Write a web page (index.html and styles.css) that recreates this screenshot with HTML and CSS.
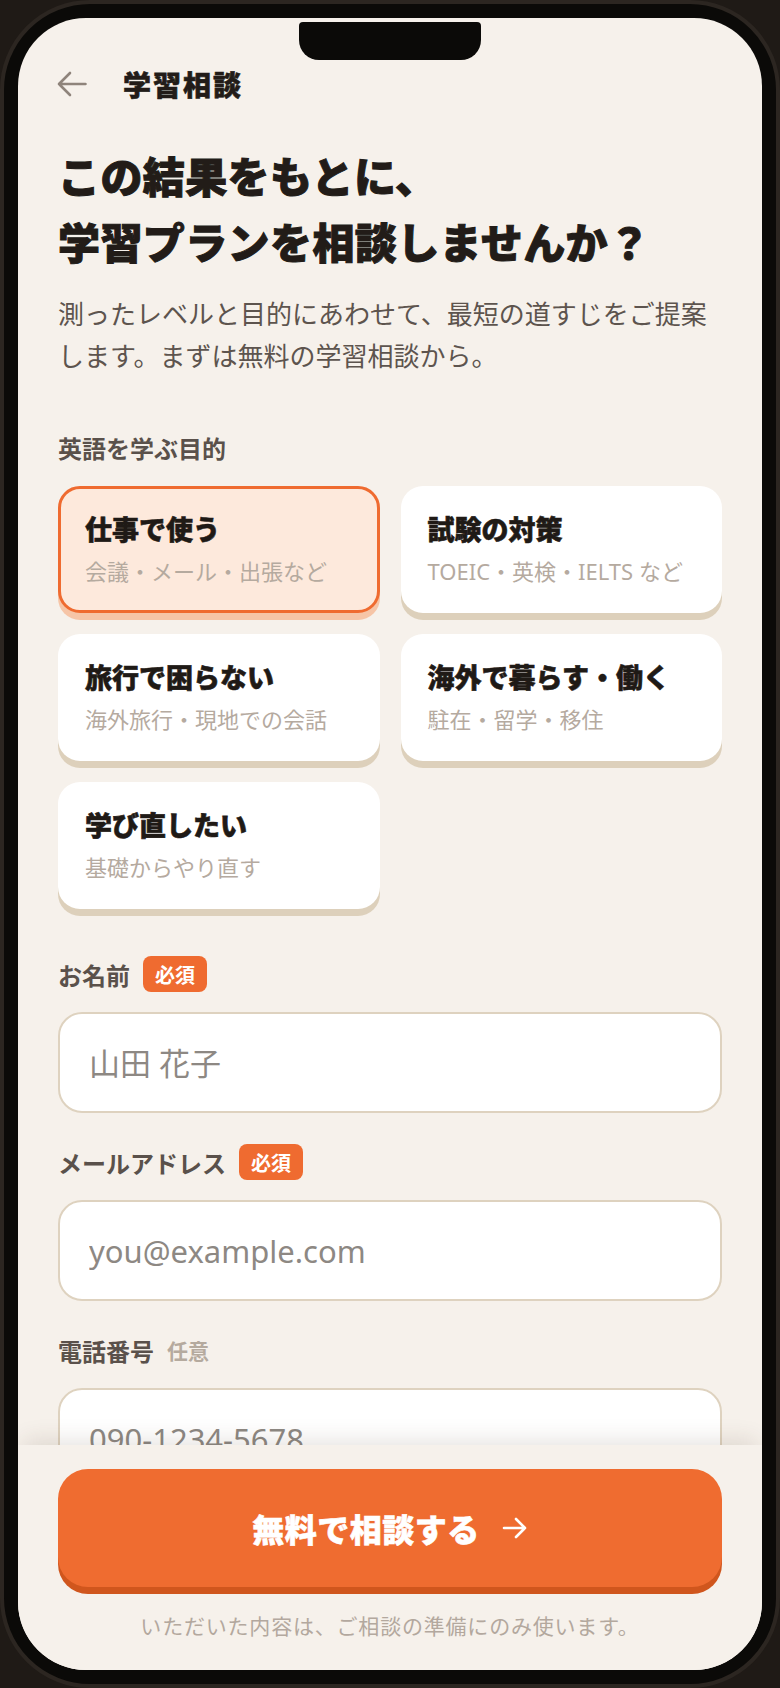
FILE: index.html
```html
<!DOCTYPE html>
<html lang="ja">
<head>
    <meta charset="UTF-8">
    <meta name="viewport" content="width=device-width, initial-scale=1.0">
    <title>学習相談</title>
    <link rel="stylesheet" href="styles.css">
</head>
<body>
    <div class="phone">
        <div class="screen">
            <div class="notch"></div>

            <div class="content">
                <header class="nav">
                    <svg class="nav-back" width="30" height="26" viewBox="0 0 30 26" fill="none">
                        <path d="M28.5 13H2M13 2L2 13l11 11" stroke="#8f847b" stroke-width="2.6" stroke-linecap="round" stroke-linejoin="round"/>
                    </svg>
                    <h1 class="nav-title">学習相談</h1>
                </header>

                <h2 class="headline">この結果をもとに、<br>学習プランを相談しませんか？</h2>
                <p class="lead">測ったレベルと目的にあわせて、最短の道すじをご提案します。まずは無料の学習相談から。</p>

                <div class="section-label">英語を学ぶ目的</div>
                <div class="options">
                    <button class="option is-selected">
                        <span class="option-title">仕事で使う</span>
                        <span class="option-sub">会議・メール・出張など</span>
                    </button>
                    <button class="option">
                        <span class="option-title">試験の対策</span>
                        <span class="option-sub">TOEIC・英検・IELTS など</span>
                    </button>
                    <button class="option">
                        <span class="option-title">旅行で困らない</span>
                        <span class="option-sub">海外旅行・現地での会話</span>
                    </button>
                    <button class="option">
                        <span class="option-title">海外で暮らす・働く</span>
                        <span class="option-sub">駐在・留学・移住</span>
                    </button>
                    <button class="option">
                        <span class="option-title">学び直したい</span>
                        <span class="option-sub">基礎からやり直す</span>
                    </button>
                </div>

                <div class="field">
                    <label class="field-label" for="name">お名前 <span class="badge">必須</span></label>
                    <input class="field-input" id="name" type="text" placeholder="山田 花子">
                </div>

                <div class="field">
                    <label class="field-label" for="email">メールアドレス <span class="badge">必須</span></label>
                    <input class="field-input" id="email" type="email" placeholder="you@example.com">
                </div>

                <div class="field">
                    <label class="field-label" for="tel">電話番号 <span class="optional">任意</span></label>
                    <input class="field-input" id="tel" type="tel" placeholder="090-1234-5678">
                </div>
            </div>

            <div class="bottom-bar">
                <button class="submit">
                    無料で相談する
                    <svg width="26" height="24" viewBox="0 0 26 24" fill="none">
                        <path d="M2 12h21M14 3l9 9-9 9" stroke="#fff" stroke-width="2.6" stroke-linecap="round" stroke-linejoin="round"/>
                    </svg>
                </button>
                <p class="note">いただいた内容は、ご相談の準備にのみ使います。</p>
            </div>
        </div>
    </div>
</body>
</html>
```

FILE: styles.css
```css
body {
    margin: 0;
    padding: 0;
    background-color: #1f1a16;
    font-family: "Noto Sans", "Noto Sans CJK JP", sans-serif;
}

.phone {
    width: 780px;
    height: 1688px;
    box-sizing: border-box;
    border: 4px solid #2c2621;
    border-radius: 90px;
    background-color: #0b0a08;
    padding: 14px;
}

.screen {
    position: relative;
    height: 100%;
    display: flex;
    flex-direction: column;
    border-radius: 68px;
    background-color: #f6f1eb;
    overflow: hidden;
}

.notch {
    position: absolute;
    top: 4px;
    left: 50%;
    width: 182px;
    height: 38px;
    margin-left: -91px;
    background-color: #0b0a08;
    border-radius: 4px 4px 20px 20px;
    z-index: 3;
}

.content {
    flex: 1;
    overflow: hidden;
    padding: 42px 40px 0;
}

/* header */
.nav {
    display: flex;
    align-items: center;
    gap: 36px;
    height: 48px;
}

.nav-back {
    flex: none;
    margin-left: -1px;
}

.nav-title {
    margin: 0;
    font-size: 28px;
    font-weight: 900;
    letter-spacing: 2px;
    color: #221c18;
    -webkit-text-stroke: 0.6px #221c18;
}

.headline {
    margin: 36px 0 0;
    font-size: 42px;
    line-height: 66px;
    font-weight: 900;
    letter-spacing: 0.4px;
    color: #221c18;
    -webkit-text-stroke: 1px #221c18;
}

.lead {
    margin: 17px 0 0;
    font-size: 26px;
    line-height: 42px;
    color: #5d544e;
}

.section-label {
    margin-top: 54px;
    font-size: 24px;
    line-height: 36px;
    font-weight: 700;
    color: #5a514b;
}

/* purpose cards */
.options {
    display: grid;
    grid-template-columns: 1fr 1fr;
    gap: 21px;
    margin-top: 19px;
}

.option {
    display: flex;
    flex-direction: column;
    align-items: flex-start;
    padding: 22px 24px;
    border: 3px solid transparent;
    border-radius: 22px;
    background-color: #ffffff;
    box-shadow: 0 7px 0 #ddd0bb;
    font-family: inherit;
    text-align: left;
    cursor: pointer;
}

.option.is-selected {
    border-color: #ef6b30;
    background-color: #fde9dc;
    box-shadow: 0 7px 0 #f6c5a7;
}

.option-title {
    font-size: 27px;
    line-height: 38px;
    font-weight: 900;
    color: #1f1a16;
    white-space: nowrap;
    -webkit-text-stroke: 0.6px #1f1a16;
}

.option-sub {
    margin-top: 6px;
    font-size: 22px;
    line-height: 33px;
    color: #b5aa9f;
    white-space: nowrap;
}

/* form fields */
.field {
    margin-bottom: 31px;
}

.options + .field {
    margin-top: 47px;
}

.field-label {
    display: flex;
    align-items: center;
    gap: 13px;
    height: 36px;
    margin-bottom: 20px;
    font-size: 24px;
    font-weight: 700;
    color: #5a514b;
}

.badge {
    display: inline-flex;
    align-items: center;
    height: 36px;
    padding: 0 12px;
    border-radius: 8px;
    background-color: #ef6b30;
    color: #ffffff;
    font-size: 20px;
    font-weight: 700;
}

.optional {
    font-size: 21px;
    font-weight: 700;
    color: #b5aa9e;
}

.field-input {
    display: block;
    width: 100%;
    height: 101px;
    box-sizing: border-box;
    padding: 0 29px;
    border: 2px solid #ded2bf;
    border-radius: 24px;
    background-color: #ffffff;
    font-family: inherit;
    font-size: 31px;
    color: #221c18;
    outline: none;
}

.field-input::placeholder {
    color: #8d8883;
}

/* sticky footer */
.bottom-bar {
    position: relative;
    z-index: 2;
    flex: none;
    padding: 24px 40px 28px;
    background-color: #f6f1eb;
    box-shadow: 0 -10px 22px -6px rgba(70, 50, 30, 0.14);
}

.submit {
    display: flex;
    align-items: center;
    justify-content: center;
    gap: 22px;
    width: 100%;
    height: 118px;
    border: none;
    border-radius: 30px;
    background-color: #ef6c30;
    box-shadow: 0 7px 0 #d0561d;
    color: #ffffff;
    font-family: inherit;
    font-size: 32px;
    font-weight: 900;
    letter-spacing: 0.5px;
    -webkit-text-stroke: 0.6px #ffffff;
    cursor: pointer;
}

.note {
    margin: 23px 0 0;
    font-size: 21px;
    line-height: 32px;
    letter-spacing: 0.8px;
    text-align: center;
    color: #b3a89e;
}
```
